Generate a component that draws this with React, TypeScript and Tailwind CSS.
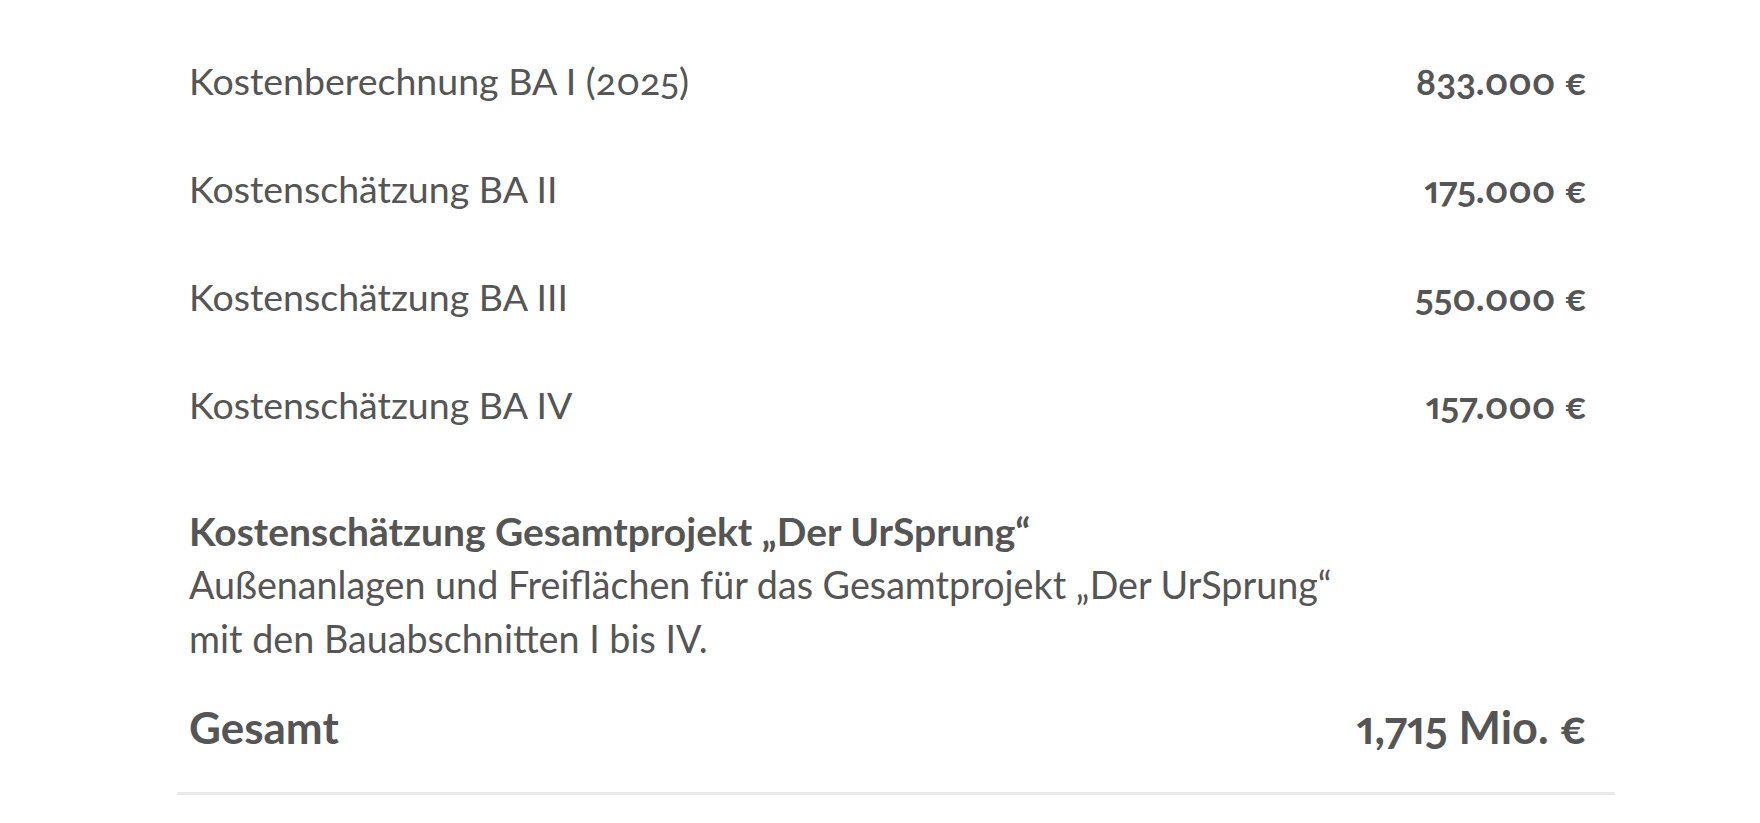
import React from "react";

const rows = [
  { label: "Kostenberechnung BA I (2025)", value: "833.000 €" },
  { label: "Kostenschätzung BA II", value: "175.000 €" },
  { label: "Kostenschätzung BA III", value: "550.000 €" },
  { label: "Kostenschätzung BA IV", value: "157.000 €" },
];

export default function App() {
  return (
    <div className="min-h-[823px] w-full bg-white text-[#555555] font-['Lato','Noto_Sans',sans-serif]">
      <div className="ml-[177px] w-[1438px] pt-[27px]">
        <div className="pl-[12px] pr-[28px]">
          {rows.map((r) => (
            <div key={r.label} className="flex h-[108px] items-center justify-between">
              <span className="text-[37.5px] leading-[54px] oldstyle-nums proportional-nums">{r.label}</span>
              <span className="text-[37px] font-bold leading-[54px] oldstyle-nums proportional-nums">{r.value}</span>
            </div>
          ))}
          <div className="mt-[45px]">
            <div className="text-[39px] font-bold leading-[54px]">Kostenschätzung Gesamtprojekt „Der UrSprung“</div>
            <p className="text-[37.7px] leading-[54px] oldstyle-nums">
              Außenanlagen und Freiflächen für das Gesamtprojekt „Der UrSprung“
              <br />
              mit den Bauabschnitten I bis IV.
            </p>
          </div>
          <div className="mt-[34px] flex h-[54px] items-center justify-between">
            <span className="text-[44px] font-bold leading-[54px]">Gesamt</span>
            <span className="text-[45px] font-bold leading-[54px] oldstyle-nums proportional-nums">1,715 Mio. €</span>
          </div>
        </div>
        <div className="mt-[38px] h-[3px] w-full bg-[#ebebeb]" />
      </div>
    </div>
  );
}
